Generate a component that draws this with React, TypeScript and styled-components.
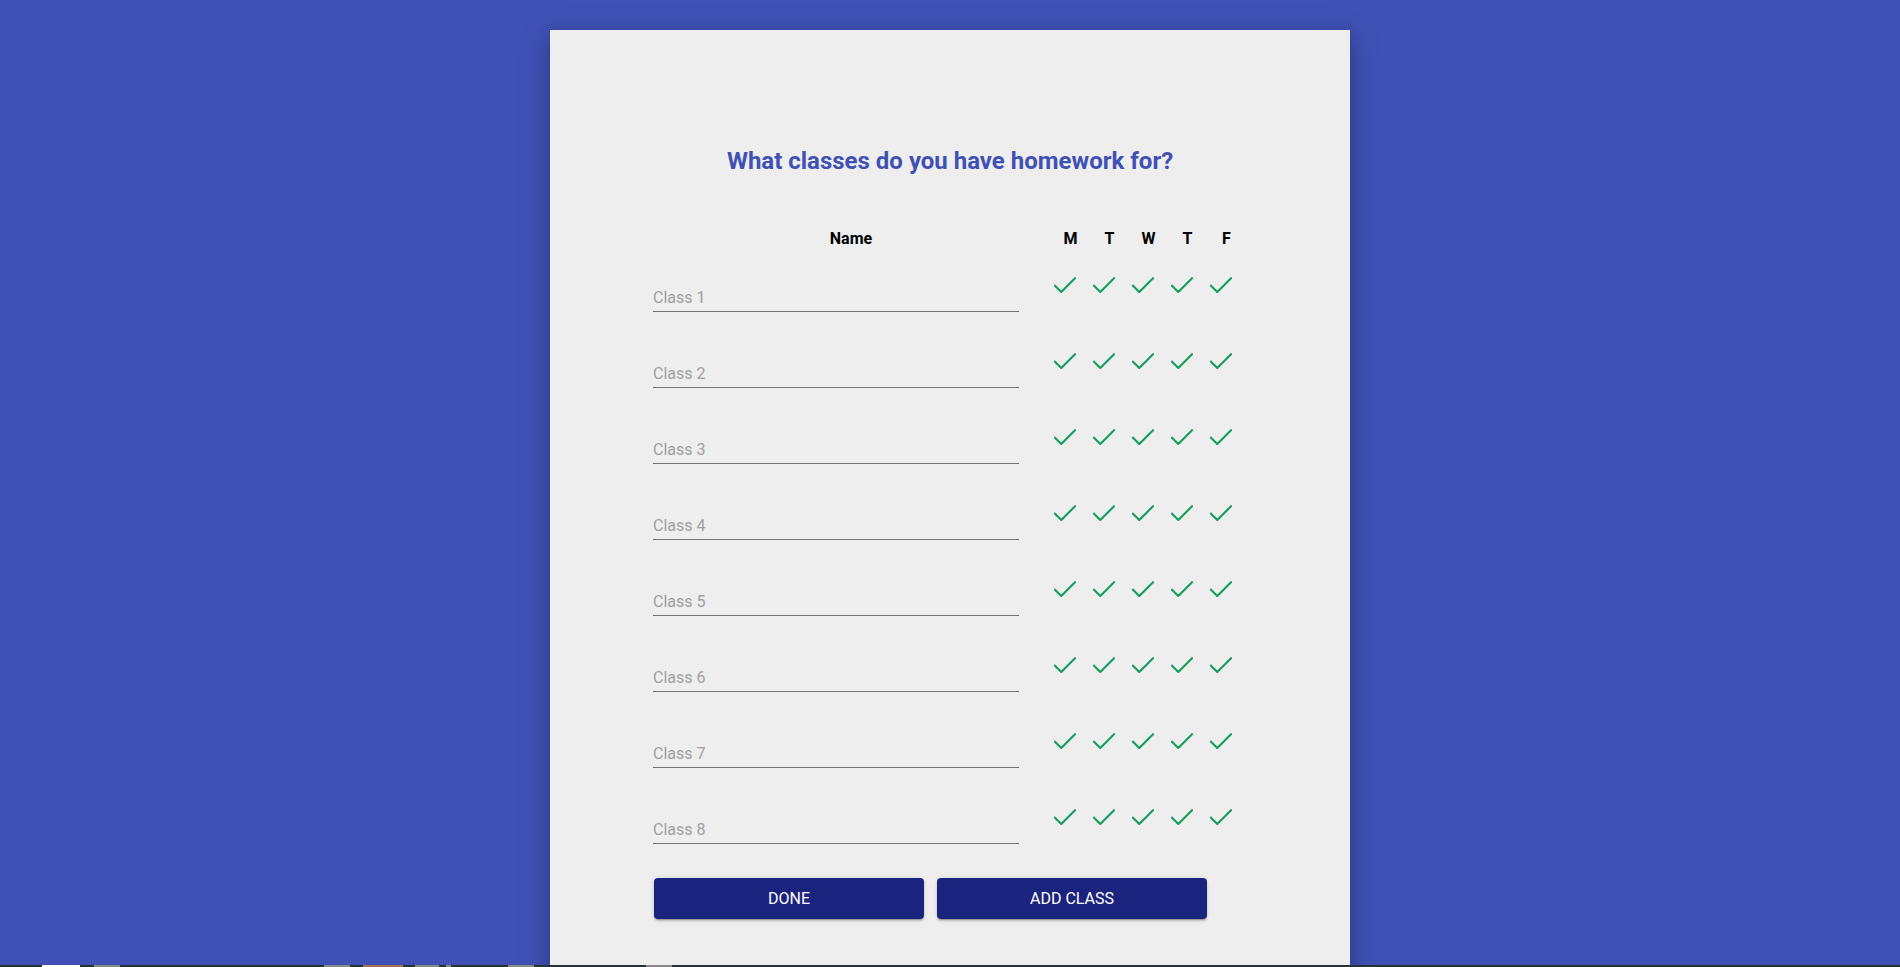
import React from "react";
import styled, { createGlobalStyle } from "styled-components";

const GlobalStyle = createGlobalStyle`
  html, body {
    margin: 0;
    padding: 0;
    overflow: hidden;
    background: #3f51b5;
    font-family: Roboto, "Liberation Sans", Arial, sans-serif;
  }
`;

const Page = styled.div`
  display: flex;
  justify-content: center;
  padding-top: 30px;
  min-height: 967px;
  box-sizing: border-box;
`;

const Card = styled.div`
  width: 800px;
  min-height: 1000px;
  background: #eeeeee;
  box-shadow: 0 8px 30px rgba(0, 0, 0, 0.22), 0 3px 12px rgba(0, 0, 0, 0.1);
  box-sizing: border-box;
  padding: 117px 0 0 103px;
  display: flex;
  flex-direction: column;
`;

const Title = styled.h1`
  margin: 0 0 0 -103px;
  font-size: 24px;
  line-height: 28px;
  font-weight: 700;
  color: #3f51b5;
  text-align: center;
`;

const Grid = styled.div`
  display: grid;
  grid-template-columns: 392px repeat(5, 39px);
  align-items: center;
`;

const HeaderRow = styled(Grid)`
  margin-top: 54px;
  height: 19px;
`;

const HeaderCell = styled.div<{ $shift?: number }>`
  font-size: 16px;
  line-height: 19px;
  font-weight: 700;
  color: #000;
  text-align: center;
  padding-left: ${(p) => p.$shift ?? 0}px;
`;

const Rows = styled.div`
  display: flex;
  flex-direction: column;
  gap: 38px;
  margin-top: 26px;
`;

const Row = styled(Grid)`
  height: 38px;
  align-items: end;
`;

const NameInput = styled.input`
  width: 366px;
  height: 32px;
  box-sizing: border-box;
  padding: 8px 0 5px;
  border: none;
  border-bottom: 1px solid rgba(0, 0, 0, 0.52);
  background: transparent;
  font-family: Roboto, "Liberation Sans", Arial, sans-serif;
  font-size: 16px;
  line-height: 19px;
  color: rgba(0, 0, 0, 0.87);
  outline: none;
  &::placeholder {
    color: #a0a0a0;
    opacity: 1;
  }
`;

const CheckCell = styled.div`
  align-self: start;
  display: flex;
  justify-content: center;
  margin-top: 3px;
`;

const ButtonRow = styled.div`
  display: flex;
  gap: 13px;
  margin-top: 34px;
  padding-left: 1px;
`;

const ActionButton = styled.button`
  width: 270px;
  height: 41px;
  border: none;
  border-radius: 4px;
  background: #1a237e;
  color: #ffffff;
  font-family: Roboto, "Liberation Sans", Arial, sans-serif;
  font-size: 16px;
  font-weight: 400;
  text-transform: uppercase;
  box-shadow: 0 3px 1px -2px rgba(0, 0, 0, 0.2), 0 2px 2px 0 rgba(0, 0, 0, 0.14),
    0 1px 5px 0 rgba(0, 0, 0, 0.12);
  cursor: pointer;
`;

const TaskStrip = styled.div`
  position: fixed;
  left: 0;
  right: 0;
  bottom: 0;
  height: 2px;
  background: #263238;
`;

const StripBlock = styled.div<{ $color: string }>`
  position: absolute;
  top: 0;
  height: 2px;
  background: ${(p) => p.$color};
`;

const Check = () => (
  <svg width="22" height="16" viewBox="0 0 22 16" fill="none">
    <polyline
      points="1,8.8 7.3,15 21,1.3"
      stroke="#139e5b"
      strokeWidth="2.1"
      strokeLinecap="square"
      strokeLinejoin="miter"
    />
  </svg>
);

const days = ["M", "T", "W", "T", "F"];
const classes = [1, 2, 3, 4, 5, 6, 7, 8];

const strip: [number, number, string][] = [
  [42, 38, "#ffffff"],
  [94, 26, "#8a8a8a"],
  [324, 26, "#8a8a8a"],
  [363, 40, "#a56f55"],
  [415, 24, "#8a8a8a"],
  [446, 5, "#8a8a8a"],
  [508, 26, "#8a8a8a"],
  [646, 26, "#8a8a8a"],
];

export default function App() {
  return (
    <>
      <GlobalStyle />
      <Page>
        <Card>
          <Title>What classes do you have homework for?</Title>
          <HeaderRow>
            <HeaderCell $shift={4}>Name</HeaderCell>
            {days.map((d, i) => (
              <HeaderCell key={i} $shift={12}>
                {d}
              </HeaderCell>
            ))}
          </HeaderRow>
          <Rows>
            {classes.map((n) => (
              <Row key={n}>
                <NameInput placeholder={`Class ${n}`} />
                {days.map((_, i) => (
                  <CheckCell key={i}>
                    <Check />
                  </CheckCell>
                ))}
              </Row>
            ))}
          </Rows>
          <ButtonRow>
            <ActionButton>Done</ActionButton>
            <ActionButton>Add Class</ActionButton>
          </ButtonRow>
        </Card>
      </Page>
      <TaskStrip>
        {strip.map(([x, w, c], i) => (
          <StripBlock key={i} $color={c} style={{ left: x, width: w }} />
        ))}
      </TaskStrip>
    </>
  );
}
